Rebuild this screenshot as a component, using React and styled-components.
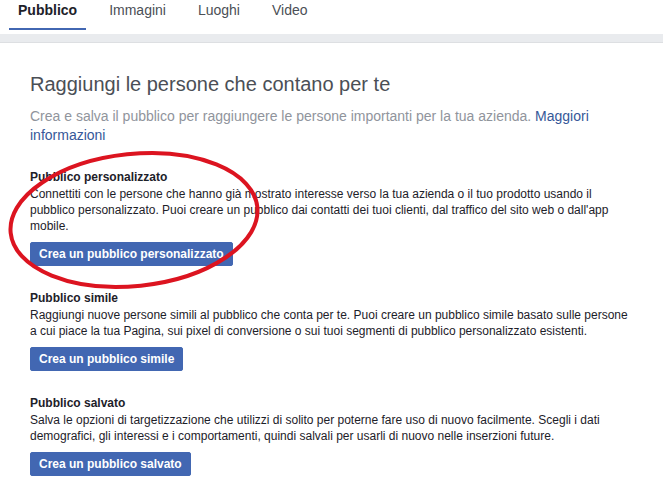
import React from 'react';
import styled, { createGlobalStyle } from 'styled-components';

const colors = {
  blue: '#4267b2',
  link: '#365899',
  text: '#1d2129',
  heading: '#4b4f56',
  muted: '#90949c',
  tab: '#4b4f56',
  band: '#e9ebee',
  bandLine: '#dddfe2',
  red: '#dc1420',
};

const GlobalStyle = createGlobalStyle`
  body {
    margin: 0;
    background: #fff;
    font-family: "Liberation Sans", Arial, sans-serif;
  }
`;

const Page = styled.div`
  position: relative;
  width: 663px;
  height: 504px;
  overflow: hidden;
  background: #fff;
`;

const TabBar = styled.nav`
  display: flex;
  gap: 14px;
  padding: 0 9px 4px;
`;

const Tab = styled.div`
  box-sizing: border-box;
  height: 30px;
  padding: 0 9px;
  font-size: 14px;
  line-height: 20px;
  color: ${(p) => (p.$active ? colors.text : colors.tab)};
  font-weight: ${(p) => (p.$active ? 'bold' : 'normal')};
  border-bottom: 2px solid ${(p) => (p.$active ? colors.blue : 'transparent')};
`;

const Band = styled.div`
  height: 8px;
  background: ${colors.band};
  border-bottom: 1px solid ${colors.bandLine};
`;

const Content = styled.main`
  padding: 29px 30px 0;
`;

const Heading = styled.h1`
  margin: 0;
  font-size: 20px;
  line-height: 24px;
  font-weight: normal;
  color: ${colors.heading};
`;

const Lead = styled.p`
  margin: 11px 0 0;
  font-size: 14px;
  line-height: 19px;
  color: ${colors.muted};
`;

const Link = styled.a`
  color: ${colors.link};
  text-decoration: none;
`;

const Section = styled.section`
  margin-top: 24px;
`;

const Title = styled.div`
  font-size: 12px;
  line-height: 17px;
  font-weight: bold;
  color: ${colors.text};
`;

const Desc = styled.div`
  font-size: 12px;
  line-height: 16px;
  color: ${colors.text};
`;

const Button = styled.button`
  box-sizing: border-box;
  margin-top: 8px;
  height: 24px;
  padding: 0 8px;
  border: 1px solid ${colors.blue};
  border-radius: 2px;
  background: ${colors.blue};
  color: #fff;
  font-family: inherit;
  font-size: 12px;
  font-weight: bold;
  line-height: 22px;
  cursor: pointer;
`;

const Annotation = styled.svg`
  position: absolute;
  left: 0;
  top: 0;
  pointer-events: none;
`;

const tabs = ['Pubblico', 'Immagini', 'Luoghi', 'Video'];

const sections = [
  {
    title: 'Pubblico personalizzato',
    desc: "Connettiti con le persone che hanno già mostrato interesse verso la tua azienda o il tuo prodotto usando il pubblico personalizzato. Puoi creare un pubblico dai contatti dei tuoi clienti, dal traffico del sito web o dall'app mobile.",
    button: 'Crea un pubblico personalizzato',
  },
  {
    title: 'Pubblico simile',
    desc: 'Raggiungi nuove persone simili al pubblico che conta per te. Puoi creare un pubblico simile basato sulle persone a cui piace la tua Pagina, sui pixel di conversione o sui tuoi segmenti di pubblico personalizzato esistenti.',
    button: 'Crea un pubblico simile',
  },
  {
    title: 'Pubblico salvato',
    desc: 'Salva le opzioni di targetizzazione che utilizzi di solito per poterne fare uso di nuovo facilmente. Scegli i dati demografici, gli interessi e i comportamenti, quindi salvali per usarli di nuovo nelle inserzioni future.',
    button: 'Crea un pubblico salvato',
  },
];

const App = () => (
  <>
    <GlobalStyle />
    <Page>
      <TabBar>
        {tabs.map((t, i) => (
          <Tab key={t} $active={i === 0}>{t}</Tab>
        ))}
      </TabBar>
      <Band />
      <Content>
        <Heading>Raggiungi le persone che contano per te</Heading>
        <Lead>
          Crea e salva il pubblico per raggiungere le persone importanti per la tua azienda.{' '}
          <Link href="#">Maggiori informazioni</Link>
        </Lead>
        {sections.map((s) => (
          <Section key={s.title}>
            <Title>{s.title}</Title>
            <Desc>{s.desc}</Desc>
            <Button>{s.button}</Button>
          </Section>
        ))}
      </Content>
      {/* hand-drawn red circle around the first section */}
      <Annotation width="663" height="504" viewBox="0 0 663 504">
        <ellipse
          cx="134"
          cy="220"
          rx="124"
          ry="66"
          transform="rotate(-6 134 220)"
          fill="none"
          stroke={colors.red}
          strokeWidth="4"
        />
      </Annotation>
    </Page>
  </>
);

export default App;
